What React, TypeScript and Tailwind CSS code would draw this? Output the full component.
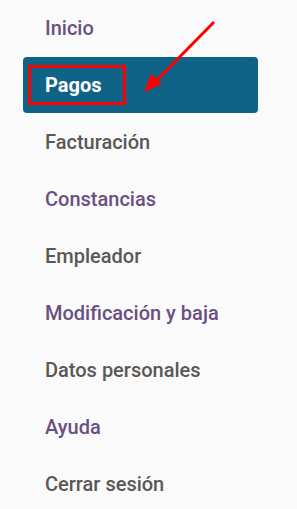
import React from 'react';

const items = [
  { label: 'Inicio', visited: true },
  { label: 'Pagos', active: true },
  { label: 'Facturación' },
  { label: 'Constancias', visited: true },
  { label: 'Empleador' },
  { label: 'Modificación y baja', visited: true },
  { label: 'Datos personales' },
  { label: 'Ayuda', visited: true },
  { label: 'Cerrar sesión' },
];

export default function App() {
  return (
    <div
      className="relative w-[297px] h-[509px] bg-[#fafafa] overflow-hidden"
      style={{ fontFamily: 'Roboto, "Noto Sans", sans-serif' }}
    >
      <nav className="flex flex-col -mt-[1px]">
        {items.map((it) =>
          it.active ? (
            <div key={it.label} className="h-[57px] flex items-center">
              <a
                href="#"
                className="relative ml-[23px] w-[235px] h-[56px] rounded-[4px] bg-[#0f6387] pl-[22px] flex items-center text-[20px] font-bold text-white"
              >
                {it.label}
                <span className="absolute left-[5px] top-[8px] w-[98px] h-[40px] border-[3px] border-[#ff0000]" />
              </a>
            </div>
          ) : (
            <a
              key={it.label}
              href="#"
              className={
                'h-[57px] flex items-center pl-[45px] text-[20px] font-medium ' +
                (it.visited ? 'text-[#6a5082]' : 'text-[#585858]')
              }
            >
              {it.label}
            </a>
          )
        )}
      </nav>
      <svg className="absolute left-0 top-0 pointer-events-none" width="297" height="509">
        <line x1="214" y1="22" x2="155" y2="82" stroke="#ff0000" strokeWidth="3" />
        <polygon points="144,92 151,74 162,84" fill="#ff0000" />
      </svg>
    </div>
  );
}
